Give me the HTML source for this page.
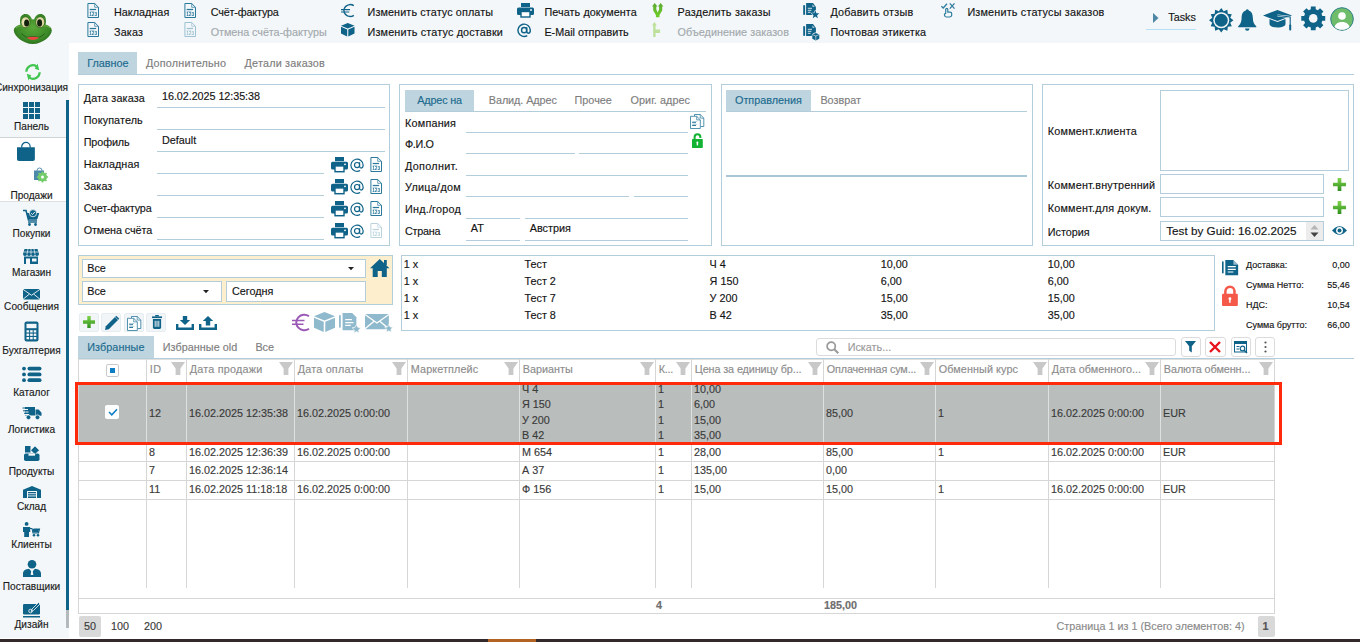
<!DOCTYPE html>
<html lang="ru"><head><meta charset="utf-8"><title>Продажи</title>
<style>
html,body{margin:0;padding:0}
body{width:1360px;height:642px;overflow:hidden;position:relative;background:#fff;
 font-family:"Liberation Sans",sans-serif;font-size:10.8px;color:#141414}
.a{position:absolute}
.t{white-space:nowrap;line-height:16px;height:16px;-webkit-text-stroke:.15px}
.dis{color:#a3a9ad}
.sl{color:#1b1b1b;font-size:10.1px}
#side{position:absolute;left:0;top:0;width:69px;height:642px;overflow:hidden}
svg{overflow:visible}
</style></head>
<body>
<div class="a " style="left:0px;top:0px;width:1360px;height:43px;background:#f3f7f9"></div>
<div class="a " style="left:0px;top:0px;width:69px;height:638px;background:#f3f7f9"></div>
<div class="a " style="left:0px;top:137px;width:66px;height:65px;background:#fff;border-top:1px solid #d0d5d8;border-bottom:1px solid #dde1e3;box-sizing:border-box"></div>
<div class="a " style="left:66px;top:100px;width:3px;height:510px;background:#0f6288"></div>
<div class="a " style="left:66px;top:610px;width:3px;height:18px;background:#b4b9bc"></div>
<div class="a " style="left:0px;top:639px;width:1360px;height:3px;background:#33292a"></div>
<div class="a " style="left:488px;top:639px;width:48px;height:3px;background:#b36422"></div>
<svg class="a" style="left:0px;top:0px;" width="66" height="52" viewBox="0 0 66 52"><defs><radialGradient id="fg" cx="50%" cy="45%" r="60%"><stop offset="0" stop-color="#5aa838"/><stop offset=".7" stop-color="#3c8a28"/><stop offset="1" stop-color="#2a6a1c"/></radialGradient><radialGradient id="fe" cx="45%" cy="45%" r="60%"><stop offset="0" stop-color="#f4f0c8"/><stop offset="1" stop-color="#cfc98a"/></radialGradient></defs><path d="M20 21c0-5 2.500-7 5.500-7s5.500 2 6.500 5.500c.6-.3 1.400-.3 2 0C35 16 37.500 14 40.500 14s5.500 2 5.500 7c0 1.500-.2 2.500-.5 3.500 4 1.200 6.300 3.300 6.300 6 0 5-9 13.500-19 13.500S13.800 35.500 13.800 30.500c0-2.700 2.500-4.800 6.700-6-.3-1-.5-2-.5-3.500z" fill="url(#fg)"/><ellipse cx="25.500" cy="22.300" rx="4.500" ry="5.500" fill="url(#fe)" stroke="#2a5f18" stroke-width=".7"/><ellipse cx="40.200" cy="22.200" rx="4.500" ry="5.500" fill="url(#fe)" stroke="#2a5f18" stroke-width=".7"/><ellipse cx="26.600" cy="23" rx="2.500" ry="3.600" fill="#12200c"/><ellipse cx="39.600" cy="22.900" rx="2.500" ry="3.600" fill="#12200c"/><path d="M21.500 33.800c3 2.600 5 3.400 6 3.600 3.500-1 7.500-1 11 0 1.500-.3 4-1.500 6.200-3.900" fill="none" stroke="#24591a" stroke-width=".9"/><path d="M26.800 37.500c4-1 8.500-1 12.400 0-3 3.300-9.400 3.300-12.400 0z" fill="#e8473f"/><path d="M16 28c2-2 5-2.500 7-2M50 28c-2-2-4.500-2.500-6.500-2" fill="none" stroke="#7cc24c" stroke-width="1" opacity=".7"/></svg>
<svg class="a" style="left:24px;top:63px;" width="18" height="18" viewBox="0 0 18 18"><path d="M2.30 8.77A6.7 6.7 0 0 1 12.55 3.32" fill="none" stroke="#43c552" stroke-width="2.2"/><path d="M10.78 5.64L13.51 0.52L15.25 7.21z" fill="#43c552"/><path d="M15.70 9.23A6.7 6.7 0 0 1 5.45 14.68" fill="none" stroke="#43c552" stroke-width="2.2"/><path d="M7.22 12.36L4.49 17.48L2.75 10.79z" fill="#43c552"/></svg>
<div class="a t sl" style="left:-60px;width:183px;text-align:center;top:80.4px">Синхронизация</div>
<svg class="a" style="left:23px;top:102px;" width="18" height="18" viewBox="0 0 18 18"><rect x="0" y="0" width="5" height="5" fill="#0f6288"/><rect x="6" y="0" width="5" height="5" fill="#0f6288"/><rect x="12" y="0" width="5" height="5" fill="#0f6288"/><rect x="0" y="6" width="5" height="5" fill="#0f6288"/><rect x="6" y="6" width="5" height="5" fill="#0f6288"/><rect x="12" y="6" width="5" height="5" fill="#0f6288"/><rect x="0" y="12" width="5" height="5" fill="#0f6288"/><rect x="6" y="12" width="5" height="5" fill="#0f6288"/><rect x="12" y="12" width="5" height="5" fill="#0f6288"/></svg>
<div class="a t sl" style="left:-60px;width:183px;text-align:center;top:118.7px">Панель</div>
<svg class="a" style="left:17px;top:142px;transform:scale(.94,.97);transform-origin:0 0" width="19" height="19.5" viewBox="0 0 19 19.5"><path d="M5 6V5a4.5 4.5 0 0 1 9 0v1" fill="none" stroke="#0f6288" stroke-width="1.3"/><path d="M0 5.5h19v12a2 2 0 0 1-2 2H2a2 2 0 0 1-2-2z" fill="#0f6288"/></svg>
<svg class="a" style="left:33px;top:167px;" width="15" height="15" viewBox="0 0 15 15"><path d="M4 4V3.5a2.5 2.5 0 0 1 5 0V4" fill="none" stroke="#5b93b0" stroke-width="1"/><path d="M1 3.5h10v9.5H1z" fill="#4d89a8"/><circle cx="9.5" cy="10" r="4.6" fill="#74cb6a"/><circle cx="9.5" cy="10" r="1.6" fill="#fff"/><g stroke="#74cb6a" stroke-width="1.6"><path d="M9.5 4.4v11.2M3.9 10h11.2M5.5 6l8 8M13.5 6l-8 8"/></g><circle cx="9.5" cy="10" r="1.5" fill="#fff"/></svg>
<div class="a t sl" style="left:-60px;width:183px;text-align:center;top:187.9px">Продажи</div>
<svg class="a" style="left:23px;top:209px;" width="17" height="17" viewBox="0 0 17 17"><path d="M0 1.5h3l2.5 9.5h8.5" fill="none" stroke="#0f6288" stroke-width="1.6"/><path d="M3.6 4h12.6l-1.8 6H5.2z" fill="#0f6288"/><circle cx="10" cy="4.2" r="3.6" fill="#0f6288" stroke="#f3f7f9" stroke-width=".8"/><path d="M8.2 4.2l1.3 1.3 2.3-2.5" stroke="#fff" stroke-width=".9" fill="none"/><rect x="5" y="12.3" width="9" height="1.4" fill="#0f6288"/><circle cx="6.5" cy="15.5" r="1.4" fill="#0f6288"/><circle cx="12.5" cy="15.5" r="1.4" fill="#0f6288"/></svg>
<div class="a t sl" style="left:-60px;width:183px;text-align:center;top:226.4px">Покупки</div>
<svg class="a" style="left:23px;top:249px;" width="16" height="15" viewBox="0 0 16 15"><path d="M1.5 0h13l1.5 5a2 2 0 0 1-4 0a2 2 0 0 1-4 0a2 2 0 0 1-4 0a2 2 0 0 1-4 0z" fill="#0f6288"/><g stroke="#f3f7f9" stroke-width=".7"><path d="M5 0L4 5M8 0v5M11 0l1 5M.5 3h15"/></g><path d="M1 7.5h14V15H1z" fill="#0f6288"/><rect x="3" y="9.5" width="4" height="5.5" fill="#f3f7f9"/><rect x="9" y="9.5" width="4.5" height="3" fill="#f3f7f9"/></svg>
<div class="a t sl" style="left:-60px;width:183px;text-align:center;top:265.4px">Магазин</div>
<svg class="a" style="left:23px;top:289px;" width="17" height="10.5" viewBox="0 0 17 10.5"><rect x="0" y="0" width="17" height="10.5" rx="1" fill="#0f6288"/><path d="M0 .3l8.5 6 8.5-6M0 10.3l6.3-5.2M17 10.3l-6.3-5.2" fill="none" stroke="#f3f7f9" stroke-width=".9"/></svg>
<div class="a t sl" style="left:-60px;width:183px;text-align:center;top:298.7px">Сообщения</div>
<svg class="a" style="left:24px;top:321px;" width="15" height="21" viewBox="0 0 15 21"><rect x=".5" y=".5" width="14" height="20" rx="2" fill="#0f6288"/><rect x="2.5" y="2.8" width="10" height="4.4" fill="#f3f7f9"/><rect x="2.5" y="9.2" width="2.6" height="2.3" fill="#f3f7f9"/><rect x="6.1" y="9.2" width="2.6" height="2.3" fill="#f3f7f9"/><rect x="9.7" y="9.2" width="2.6" height="2.3" fill="#f3f7f9"/><rect x="2.5" y="12.6" width="2.6" height="2.3" fill="#f3f7f9"/><rect x="6.1" y="12.6" width="2.6" height="2.3" fill="#f3f7f9"/><rect x="9.7" y="12.6" width="2.6" height="2.3" fill="#f3f7f9"/><rect x="2.5" y="16.0" width="2.6" height="2.3" fill="#f3f7f9"/><rect x="6.1" y="16.0" width="2.6" height="2.3" fill="#f3f7f9"/><rect x="9.7" y="16.0" width="2.6" height="2.3" fill="#f3f7f9"/></svg>
<div class="a t sl" style="left:-60px;width:183px;text-align:center;top:343.29999999999995px">Бухгалтерия</div>
<svg class="a" style="left:21.5px;top:366px;" width="20" height="17" viewBox="0 0 20 17"><circle cx="2" cy="2.6" r="1.9" fill="#0f6288"/><rect x="5.5" y="0.7" width="14" height="3.8" rx="1.9" fill="#0f6288"/><circle cx="2" cy="8.4" r="1.9" fill="#0f6288"/><rect x="5.5" y="6.5" width="14" height="3.8" rx="1.9" fill="#0f6288"/><circle cx="2" cy="14.2" r="1.9" fill="#0f6288"/><rect x="5.5" y="12.299999999999999" width="14" height="3.8" rx="1.9" fill="#0f6288"/></svg>
<div class="a t sl" style="left:-60px;width:183px;text-align:center;top:385.09999999999997px">Каталог</div>
<svg class="a" style="left:21.5px;top:407px;" width="20" height="13" viewBox="0 0 20 13"><path d="M3 0h10v8.5H3z" fill="#0f6288"/><path d="M13.5 2.5h3.2l2.8 3.2v3H13.5z" fill="#0f6288"/><g stroke="#f3f7f9" stroke-width="1"><path d="M0 2.5h6M1.5 5h5M3 7.5h4"/></g><g stroke="#0f6288" stroke-width="1"><path d="M.5 1h4M1 3.8h3M2 6.3h2"/></g><circle cx="6.5" cy="10.3" r="2.4" fill="#0f6288" stroke="#f3f7f9" stroke-width=".8"/><circle cx="15.5" cy="10.3" r="2.4" fill="#0f6288" stroke="#f3f7f9" stroke-width=".8"/></svg>
<div class="a t sl" style="left:-60px;width:183px;text-align:center;top:421.7px">Логистика</div>
<svg class="a" style="left:24px;top:446px;" width="16" height="15" viewBox="0 0 16 15"><rect x="0" y="7.5" width="15.5" height="7.5" rx="1.8" fill="#0f6288"/><rect x="1" y="0" width="5.5" height="6.5" fill="#0f6288"/><path d="M11 0l4.3 4.3-4.3 4.3-4.3-4.3z" fill="#0f6288" stroke="#f3f7f9" stroke-width=".6"/><path d="M4.5 7.5h6.5v2.2H4.5z" fill="#f3f7f9"/></svg>
<div class="a t sl" style="left:-60px;width:183px;text-align:center;top:463.7px">Продукты</div>
<svg class="a" style="left:22.5px;top:486px;" width="18" height="12" viewBox="0 0 18 12"><path d="M9 0l9 3.8V12H0V3.8z" fill="#0f6288"/><rect x="4" y="5" width="10" height="7" fill="#f3f7f9"/><g fill="#0f6288"><rect x="5" y="6" width="8" height="1.3"/><rect x="5" y="8.2" width="8" height="1.3"/><rect x="5" y="10.4" width="8" height="1.6"/></g></svg>
<div class="a t sl" style="left:-60px;width:183px;text-align:center;top:499.4px">Склад</div>
<svg class="a" style="left:23px;top:522px;" width="17" height="15" viewBox="0 0 17 15"><circle cx="3.6" cy="1.9" r="1.9" fill="#0f6288"/><path d="M0 5h7.2v5H6v5H1.2v-5H0z" fill="#0f6288"/><path d="M7 6.5h2l1 4.5h5.5l1-4h-6" fill="none" stroke="#0f6288" stroke-width="1.1"/><path d="M9.6 7h6.6l-.9 3.6h-5z" fill="#0f6288"/><circle cx="11" cy="13.3" r="1.3" fill="#0f6288"/><circle cx="15" cy="13.3" r="1.3" fill="#0f6288"/></svg>
<div class="a t sl" style="left:-60px;width:183px;text-align:center;top:537.4px">Клиенты</div>
<svg class="a" style="left:23px;top:560px;" width="18" height="17" viewBox="0 0 18 17"><circle cx="9" cy="4.3" r="4.3" fill="#0f6288"/><path d="M0 17v-3.5c0-3 3-4.5 6-4.7L9 12l3-3.2c3 .2 6 1.700 6 4.700V17z" fill="#0f6288"/><path d="M8.300 10.500h1.400l.6 4.500H7.700z" fill="#f3f7f9"/></svg>
<div class="a t sl" style="left:-60px;width:183px;text-align:center;top:578.9px">Поставщики</div>
<svg class="a" style="left:23px;top:601px;" width="18" height="17" viewBox="0 0 18 17"><rect x="0" y="3" width="17" height="10.500" rx="1.200" fill="#0f6288"/><rect x="0" y="15" width="17" height="1.500" fill="#0f6288"/><path d="M8 10.500l1-2.500L15.500 1.500l1.500 1.500L10.500 9.500z" fill="#0f6288" stroke="#f3f7f9" stroke-width=".8"/><circle cx="7.500" cy="10" r="1.800" fill="none" stroke="#f3f7f9" stroke-width=".8"/></svg>
<div class="a t sl" style="left:-60px;width:183px;text-align:center;top:617.4px">Дизайн</div>
<svg class="a" style="left:86.5px;top:2.7px;" width="13" height="15" viewBox="0 0 13 15"><g opacity="1" style="will-change:transform"><path d="M.9 .5h6.800l3.800 3.800v10.200H.9z" fill="none" stroke="#2a789b" stroke-width="1"/><path d="M7.700 .5v3.800h3.800" fill="none" stroke="#2a789b" stroke-width=".7"/><rect x="2.700" y="5.900" width="6.400" height="1.200" fill="#2a789b"/><rect x="2.700" y="7.900" width="4.600" height=".7" fill="#2a789b" opacity=".55"/><text x="6.200" y="13.300" font-size="4.800" font-weight="bold" text-anchor="middle" fill="#2a789b" font-family="Liberation Sans, sans-serif" style="-webkit-font-smoothing:antialiased">123</text></g></svg>
<div class="a t " style="left:114px;top:4.199999999999999px;letter-spacing:0.02px;">Накладная</div>
<svg class="a" style="left:86.5px;top:22.2px;" width="13" height="15" viewBox="0 0 13 15"><g opacity="1" style="will-change:transform"><path d="M.9 .5h6.800l3.800 3.800v10.200H.9z" fill="none" stroke="#2a789b" stroke-width="1"/><path d="M7.700 .5v3.800h3.800" fill="none" stroke="#2a789b" stroke-width=".7"/><rect x="2.700" y="5.900" width="6.400" height="1.200" fill="#2a789b"/><rect x="2.700" y="7.900" width="4.600" height=".7" fill="#2a789b" opacity=".55"/><text x="6.200" y="13.300" font-size="4.800" font-weight="bold" text-anchor="middle" fill="#2a789b" font-family="Liberation Sans, sans-serif" style="-webkit-font-smoothing:antialiased">123</text></g></svg>
<div class="a t " style="left:114px;top:24px;letter-spacing:0.17px;">Заказ</div>
<svg class="a" style="left:183.8px;top:2.7px;" width="13" height="15" viewBox="0 0 13 15"><g opacity="1" style="will-change:transform"><path d="M.9 .5h6.800l3.800 3.800v10.200H.9z" fill="none" stroke="#2a789b" stroke-width="1"/><path d="M7.700 .5v3.800h3.800" fill="none" stroke="#2a789b" stroke-width=".7"/><rect x="2.700" y="5.900" width="6.400" height="1.200" fill="#2a789b"/><rect x="2.700" y="7.900" width="4.600" height=".7" fill="#2a789b" opacity=".55"/><text x="6.200" y="13.300" font-size="4.800" font-weight="bold" text-anchor="middle" fill="#2a789b" font-family="Liberation Sans, sans-serif" style="-webkit-font-smoothing:antialiased">123</text></g></svg>
<div class="a t " style="left:210.7px;top:4.199999999999999px;letter-spacing:-0.16px;">Счёт-фактура</div>
<svg class="a" style="left:183.8px;top:22.2px;" width="13" height="15" viewBox="0 0 13 15"><g opacity="0.75" style="will-change:transform"><path d="M.9 .5h6.800l3.800 3.800v10.200H.9z" fill="none" stroke="#7fb0c6" stroke-width="1"/><path d="M7.700 .5v3.800h3.800" fill="none" stroke="#7fb0c6" stroke-width=".7"/><rect x="2.700" y="5.900" width="6.400" height="1.200" fill="#7fb0c6"/><rect x="2.700" y="7.900" width="4.600" height=".7" fill="#7fb0c6" opacity=".55"/><text x="6.200" y="13.300" font-size="4.800" font-weight="bold" text-anchor="middle" fill="#7fb0c6" font-family="Liberation Sans, sans-serif" style="-webkit-font-smoothing:antialiased">123</text></g></svg>
<div class="a t dis" style="left:210.7px;top:24px;letter-spacing:-0.05px;">Отмена счёта-фактуры</div>
<svg class="a" style="left:341px;top:4px;" width="13.5" height="13" viewBox="0 0 13.5 13"><path d="M12.800 1.700A6.200 5.900 0 1 0 12.800 11.300" fill="none" stroke="#0f6288" stroke-width="1.500"/><path d="M0 5.600h9M0 8h8.300" stroke="#0f6288" stroke-width="1.100"/></svg>
<div class="a t " style="left:367.5px;top:4.199999999999999px;letter-spacing:0.12px;">Изменить статус оплаты</div>
<svg class="a" style="left:341px;top:23px;" width="13.5" height="13.5" viewBox="0 0 13.5 13.5"><path d="M6.750 0L13.500 2.800 6.750 5.600 0 2.800z" fill="#0f6288"/><path d="M0 3.800l6.200 2.600v7.100L0 10.600z" fill="#0f6288"/><path d="M13.500 3.800L7.300 6.400v7.100l6.200-2.900z" fill="#0f6288"/></svg>
<div class="a t " style="left:367.5px;top:24px;letter-spacing:0.17px;">Изменить статус доставки</div>
<svg class="a" style="left:517px;top:3.3px;" width="17" height="14.5" viewBox="0 0 17 14.5"><rect x="4" y="0" width="9" height="4" fill="#0f6288"/><rect x="0" y="4.5" width="17" height="7.5" rx="1.5" fill="#0f6288"/><rect x="4" y="8.5" width="9" height="5.5" fill="#fff" stroke="#0f6288" stroke-width="1.4"/><circle cx="14" cy="7" r=".9" fill="#fff"/></svg>
<div class="a t " style="left:544.4px;top:4.199999999999999px;letter-spacing:0.09px;">Печать документа</div>
<svg class="a" style="left:517px;top:22.8px;transform:scale(.95);transform-origin:0 0" width="15" height="15" viewBox="0 0 15 15"><circle cx="7.500" cy="7.500" r="2.700" fill="none" stroke="#0f6288" stroke-width="1.5"/><path d="M10.200 4.600v4.200c0 1.300 .8 1.900 1.700 1.900 1.300 0 2.100-1.300 2.100-3.200A6.500 6.500 0 1 0 10.800 13.300" fill="none" stroke="#0f6288" stroke-width="1.5"/></svg>
<div class="a t " style="left:544.4px;top:24px;letter-spacing:-0.01px;">E-Mail отправить</div>
<svg class="a" style="left:651.8px;top:2.9px;" width="11.4" height="14.3" viewBox="0 0 11.4 14.3"><defs><linearGradient id="sg" x1="0" y1="0" x2="0" y2="1"><stop offset="0" stop-color="#5aa832"/><stop offset="1" stop-color="#6fd024"/></linearGradient></defs><path d="M2.750 0L5.500 3.600H4.300V6.500L5.700 9.600 7.100 6.500V3.600H5.900L8.650 0 11.400 3.600H10.200V7.400L7.500 12V14.300H3.900V12L1.200 7.400V3.600H0z" fill="url(#sg)"/></svg>
<div class="a t " style="left:677.6px;top:4.199999999999999px;letter-spacing:0.20px;">Разделить заказы</div>
<svg class="a" style="left:652.3px;top:22.3px;" width="8.2" height="15" viewBox="0 0 8.2 15"><path d="M2.400 0L4.800 3.500H3.600V7.600H8.100V11H3.600V15H1.200V3.500H0z" fill="#bde19a"/></svg>
<div class="a t dis" style="left:677.6px;top:24px;letter-spacing:0.05px;">Объединение заказов</div>
<svg class="a" style="left:802.7px;top:2.9px;" width="17" height="16.5" viewBox="0 0 17 16.5"><rect x=".2" y="2.200" width="1.900" height="9.600" fill="#0f6288"/><path d="M3.100 0h6.900l2.900 3.900v8.200H3.100z" fill="#0f6288"/><path d="M9.300 1.200l.2 2.600 2.300.2z" fill="#fff" opacity=".75"/><g stroke="#fff" stroke-width=".9" opacity=".9"><path d="M4.800 5.300h4.200M4.800 7.300h3.600M4.800 9.300h2.800"/></g><polygon points="12.30,7.40 13.42,10.16 16.39,10.37 14.11,12.29 14.83,15.18 12.30,13.60 9.77,15.18 10.49,12.29 8.21,10.37 11.18,10.16" fill="#0f6288" stroke="#f3f7f9" stroke-width="1" paint-order="stroke"/></svg>
<div class="a t " style="left:830.4px;top:4.199999999999999px;letter-spacing:0.22px;">Добавить отзыв</div>
<svg class="a" style="left:802.7px;top:23.9px;" width="17" height="16.5" viewBox="0 0 17 16.5"><rect x=".2" y="2.200" width="1.900" height="9.600" fill="#0f6288"/><path d="M3.100 0h6.900l2.900 3.900v8.200H3.100z" fill="#0f6288"/><path d="M9.300 1.200l.2 2.600 2.300.2z" fill="#fff" opacity=".75"/><g stroke="#fff" stroke-width=".9" opacity=".9"><path d="M4.800 5.300h4.200M4.800 7.300h3.600M4.800 9.300h2.800"/></g><circle cx="12.800" cy="12.700" r="4.300" fill="#f3f7f9"/><path d="M12.800 8.900l3.500 1.500v4.400l-3.500 1.600-3.500-1.600v-4.400z" fill="#0f6288"/><path d="M9.500 10.600l3.300 1.400 3.300-1.400M12.800 12v4" fill="none" stroke="#f3f7f9" stroke-width=".6"/></svg>
<div class="a t " style="left:830.4px;top:24px;letter-spacing:0.16px;">Почтовая этикетка</div>
<svg class="a" style="left:940.5px;top:3px;" width="15" height="14.5" viewBox="0 0 15 14.5"><g fill="none" stroke="#2f7d9f" stroke-width="1.300"><path d="M.4 3.300l1.800 1.700L6 .7"/><path d="M8.800 .4l4.700 5.200M13.500 .4L8.800 5.600"/><path d="M4.700 10.300V6.500a1.050 1.050 0 0 1 2.100 0v2.700h2.400a1.500 1.500 0 0 1 1.500 1.500v1.200a2.100 2.100 0 0 1-2.100 2.100H5.600a2.100 2.100 0 0 1-2.100-2.100v-.9z" stroke-width="1.200"/></g></svg>
<div class="a t " style="left:967.4px;top:4.199999999999999px;letter-spacing:0.19px;">Изменить статусы заказов</div>
<svg class="a" style="left:1153px;top:13px;" width="6" height="10" viewBox="0 0 6 10"><path d="M0 0l5.500 5L0 10z" fill="#4e86a5"/></svg>
<div class="a t " style="left:1168.3px;top:9px;">Tasks</div>
<div class="a " style="left:1146px;top:29px;width:50px;height:1px;background:#b5e1f7"></div>
<svg class="a" style="left:1208.8px;top:7.5px;" width="24.5" height="24.5" viewBox="0 0 24.5 24.5"><polygon points="12.25,0.05 14.66,3.27 18.35,1.68 18.83,5.67 22.82,6.15 21.23,9.84 24.45,12.25 21.23,14.66 22.82,18.35 18.83,18.83 18.35,22.82 14.66,21.23 12.25,24.45 9.84,21.23 6.15,22.82 5.67,18.83 1.68,18.35 3.27,14.66 0.05,12.25 3.27,9.84 1.68,6.15 5.67,5.67 6.15,1.68 9.84,3.27" fill="#0f6288"/><circle cx="12.250" cy="12.250" r="8" fill="#f3f7f9"/><circle cx="12.250" cy="12.250" r="6.500" fill="#0f6288"/></svg>
<svg class="a" style="left:1238px;top:9px;" width="18.5" height="22" viewBox="0 0 18.5 22"><circle cx="9.250" cy="1.800" r="1.600" fill="#0f6288"/><path d="M9.250 1.500c4.200 0 5.600 3.500 5.600 7.500 0 4 1.400 6.300 3.400 8.200v1H.2v-1c2-1.900 3.400-4.200 3.400-8.200 0-4 1.400-7.500 5.650-7.500z" fill="#0f6288"/><path d="M7 19.500h4.500a2.250 2.250 0 0 1-4.500 0z" fill="#0f6288"/></svg>
<svg class="a" style="left:1263px;top:9.5px;" width="30.5" height="21" viewBox="0 0 30.5 21"><path d="M14.500 0L29 5.500 14.500 11 0 5.500z" fill="#0f6288"/><path d="M6.500 9v5c0 2 3.600 3.500 8 3.500s8-1.500 8-3.500V9l-8 3z" fill="#0f6288"/><path d="M14.500 5.500l12.700 1.500v8" fill="none" stroke="#f3f7f9" stroke-width="2.200"/><path d="M14.500 5.500l12.700 1.500v8" fill="none" stroke="#0f6288" stroke-width="1.100"/><rect x="26.200" y="14.500" width="2" height="6" rx=".8" fill="#0f6288"/></svg>
<svg class="a" style="left:1300.5px;top:6px;" width="24.5" height="25" viewBox="0 0 24.5 25"><polygon points="8.65,3.72 9.79,3.33 9.87,0.43 14.63,0.43 14.71,3.33 15.85,3.72 16.92,4.24 19.03,2.26 22.39,5.62 20.41,7.73 20.93,8.80 21.32,9.94 24.22,10.02 24.22,14.78 21.32,14.86 20.93,16.00 20.41,17.07 22.39,19.18 19.03,22.54 16.92,20.56 15.85,21.08 14.71,21.47 14.63,24.37 9.87,24.37 9.79,21.47 8.65,21.08 7.58,20.56 5.47,22.54 2.11,19.18 4.09,17.07 3.57,16.00 3.18,14.86 0.28,14.78 0.28,10.02 3.18,9.94 3.57,8.80 4.09,7.73 2.11,5.62 5.47,2.26 7.58,4.24" fill="#0f6288"/><circle cx="12.250" cy="12.400" r="4.300" fill="#f3f7f9"/></svg>
<svg class="a" style="left:1330px;top:7px;" width="24" height="24" viewBox="0 0 24 24"><circle cx="12" cy="12" r="11.300" fill="#6fbd6b" stroke="#2f7e8c" stroke-width="1"/><clipPath id="uc"><circle cx="12" cy="12" r="10.800"/></clipPath><g clip-path="url(#uc)" fill="#fff"><circle cx="12" cy="9" r="3.800"/><path d="M4 23c0-5.500 3.500-8 8-8s8 2.500 8 8z"/></g></svg>
<div class="a " style="left:78px;top:52px;width:59px;height:23px;background:#bed5df"></div>
<div class="a " style="left:78px;top:74px;width:1276px;height:1px;background:#b3cddb"></div>
<div class="a t " style="left:87.2px;top:55.2px;color:#1b6a8e">Главное</div>
<div class="a t " style="left:146px;top:55.2px;letter-spacing:0.19px;color:#7d7d7d">Дополнительно</div>
<div class="a t " style="left:244.5px;top:55.2px;letter-spacing:0.21px;color:#7d7d7d">Детали заказов</div>
<div class="a " style="left:78px;top:84px;width:312px;height:162px;border:1px solid #b3cddb;box-sizing:border-box;background:#fff;"></div>
<div class="a t " style="left:83.7px;top:90px;letter-spacing:0.15px;">Дата заказа</div>
<div class="a " style="left:157px;top:107px;width:228px;height:1px;background:#b3cddb"></div>
<div class="a t " style="left:83.7px;top:112px;letter-spacing:0.11px;">Покупатель</div>
<div class="a " style="left:157px;top:129px;width:228px;height:1px;background:#b3cddb"></div>
<div class="a t " style="left:83.7px;top:134px;letter-spacing:-0.10px;">Профиль</div>
<div class="a " style="left:157px;top:151px;width:228px;height:1px;background:#b3cddb"></div>
<div class="a t " style="left:83.7px;top:156px;letter-spacing:0.07px;">Накладная</div>
<div class="a " style="left:157px;top:173px;width:167px;height:1px;background:#b3cddb"></div>
<svg class="a" style="left:331px;top:156.7px;transform:scale(1,1.05);transform-origin:0 0" width="17" height="14.5" viewBox="0 0 17 14.5"><rect x="4" y="0" width="9" height="4" fill="#0f6288"/><rect x="0" y="4.5" width="17" height="7.5" rx="1.5" fill="#0f6288"/><rect x="4" y="8.5" width="9" height="5.5" fill="#fff" stroke="#0f6288" stroke-width="1.4"/><circle cx="14" cy="7" r=".9" fill="#fff"/></svg>
<svg class="a" style="left:350.3px;top:158.1px;transform:scale(.94);transform-origin:0 0" width="15" height="15" viewBox="0 0 15 15"><circle cx="7.500" cy="7.500" r="2.700" fill="none" stroke="#0f6288" stroke-width="1.25"/><path d="M10.200 4.600v4.200c0 1.300 .8 1.900 1.700 1.900 1.300 0 2.100-1.300 2.100-3.200A6.500 6.500 0 1 0 10.800 13.300" fill="none" stroke="#0f6288" stroke-width="1.25"/></svg>
<svg class="a" style="left:370px;top:157px;" width="13" height="15" viewBox="0 0 13 15"><g opacity="1" style="will-change:transform"><path d="M.9 .5h6.800l3.800 3.800v10.200H.9z" fill="none" stroke="#2a789b" stroke-width="1"/><path d="M7.700 .5v3.800h3.800" fill="none" stroke="#2a789b" stroke-width=".7"/><rect x="2.700" y="5.900" width="6.400" height="1.200" fill="#2a789b"/><rect x="2.700" y="7.900" width="4.600" height=".7" fill="#2a789b" opacity=".55"/><text x="6.200" y="13.300" font-size="4.800" font-weight="bold" text-anchor="middle" fill="#2a789b" font-family="Liberation Sans, sans-serif" style="-webkit-font-smoothing:antialiased">123</text></g></svg>
<div class="a t " style="left:83.7px;top:178px;letter-spacing:0.07px;">Заказ</div>
<div class="a " style="left:157px;top:195px;width:167px;height:1px;background:#b3cddb"></div>
<svg class="a" style="left:331px;top:178.7px;transform:scale(1,1.05);transform-origin:0 0" width="17" height="14.5" viewBox="0 0 17 14.5"><rect x="4" y="0" width="9" height="4" fill="#0f6288"/><rect x="0" y="4.5" width="17" height="7.5" rx="1.5" fill="#0f6288"/><rect x="4" y="8.5" width="9" height="5.5" fill="#fff" stroke="#0f6288" stroke-width="1.4"/><circle cx="14" cy="7" r=".9" fill="#fff"/></svg>
<svg class="a" style="left:350.3px;top:180.1px;transform:scale(.94);transform-origin:0 0" width="15" height="15" viewBox="0 0 15 15"><circle cx="7.500" cy="7.500" r="2.700" fill="none" stroke="#0f6288" stroke-width="1.25"/><path d="M10.200 4.600v4.200c0 1.300 .8 1.900 1.700 1.900 1.300 0 2.100-1.300 2.100-3.200A6.500 6.500 0 1 0 10.800 13.300" fill="none" stroke="#0f6288" stroke-width="1.25"/></svg>
<svg class="a" style="left:370px;top:179px;" width="13" height="15" viewBox="0 0 13 15"><g opacity="1" style="will-change:transform"><path d="M.9 .5h6.800l3.800 3.800v10.200H.9z" fill="none" stroke="#2a789b" stroke-width="1"/><path d="M7.700 .5v3.800h3.800" fill="none" stroke="#2a789b" stroke-width=".7"/><rect x="2.700" y="5.900" width="6.400" height="1.200" fill="#2a789b"/><rect x="2.700" y="7.900" width="4.600" height=".7" fill="#2a789b" opacity=".55"/><text x="6.200" y="13.300" font-size="4.800" font-weight="bold" text-anchor="middle" fill="#2a789b" font-family="Liberation Sans, sans-serif" style="-webkit-font-smoothing:antialiased">123</text></g></svg>
<div class="a t " style="left:83.7px;top:200px;letter-spacing:-0.14px;">Счет-фактура</div>
<div class="a " style="left:157px;top:217px;width:167px;height:1px;background:#b3cddb"></div>
<svg class="a" style="left:331px;top:200.7px;transform:scale(1,1.05);transform-origin:0 0" width="17" height="14.5" viewBox="0 0 17 14.5"><rect x="4" y="0" width="9" height="4" fill="#0f6288"/><rect x="0" y="4.5" width="17" height="7.5" rx="1.5" fill="#0f6288"/><rect x="4" y="8.5" width="9" height="5.5" fill="#fff" stroke="#0f6288" stroke-width="1.4"/><circle cx="14" cy="7" r=".9" fill="#fff"/></svg>
<svg class="a" style="left:350.3px;top:202.1px;transform:scale(.94);transform-origin:0 0" width="15" height="15" viewBox="0 0 15 15"><circle cx="7.500" cy="7.500" r="2.700" fill="none" stroke="#0f6288" stroke-width="1.25"/><path d="M10.200 4.600v4.200c0 1.300 .8 1.900 1.700 1.900 1.300 0 2.100-1.300 2.100-3.200A6.500 6.500 0 1 0 10.800 13.300" fill="none" stroke="#0f6288" stroke-width="1.25"/></svg>
<svg class="a" style="left:370px;top:201px;" width="13" height="15" viewBox="0 0 13 15"><g opacity="1" style="will-change:transform"><path d="M.9 .5h6.800l3.800 3.800v10.200H.9z" fill="none" stroke="#2a789b" stroke-width="1"/><path d="M7.700 .5v3.800h3.800" fill="none" stroke="#2a789b" stroke-width=".7"/><rect x="2.700" y="5.900" width="6.400" height="1.200" fill="#2a789b"/><rect x="2.700" y="7.900" width="4.600" height=".7" fill="#2a789b" opacity=".55"/><text x="6.200" y="13.300" font-size="4.800" font-weight="bold" text-anchor="middle" fill="#2a789b" font-family="Liberation Sans, sans-serif" style="-webkit-font-smoothing:antialiased">123</text></g></svg>
<div class="a t " style="left:83.7px;top:222px;letter-spacing:-0.09px;">Отмена счёта</div>
<div class="a " style="left:157px;top:239px;width:167px;height:1px;background:#b3cddb"></div>
<svg class="a" style="left:331px;top:222.7px;transform:scale(1,1.05);transform-origin:0 0" width="17" height="14.5" viewBox="0 0 17 14.5"><rect x="4" y="0" width="9" height="4" fill="#0f6288"/><rect x="0" y="4.5" width="17" height="7.5" rx="1.5" fill="#0f6288"/><rect x="4" y="8.5" width="9" height="5.5" fill="#fff" stroke="#0f6288" stroke-width="1.4"/><circle cx="14" cy="7" r=".9" fill="#fff"/></svg>
<svg class="a" style="left:350.3px;top:224.1px;transform:scale(.94);transform-origin:0 0" width="15" height="15" viewBox="0 0 15 15"><circle cx="7.500" cy="7.500" r="2.700" fill="none" stroke="#0f6288" stroke-width="1.25"/><path d="M10.200 4.600v4.200c0 1.300 .8 1.900 1.700 1.900 1.300 0 2.100-1.300 2.100-3.200A6.500 6.500 0 1 0 10.800 13.300" fill="none" stroke="#0f6288" stroke-width="1.25"/></svg>
<svg class="a" style="left:370px;top:223px;" width="13" height="15" viewBox="0 0 13 15"><g opacity="0.7" style="will-change:transform"><path d="M.9 .5h6.800l3.800 3.800v10.200H.9z" fill="none" stroke="#9cc0d1" stroke-width="1"/><path d="M7.700 .5v3.800h3.800" fill="none" stroke="#9cc0d1" stroke-width=".7"/><rect x="2.700" y="5.900" width="6.400" height="1.200" fill="#9cc0d1"/><rect x="2.700" y="7.900" width="4.600" height=".7" fill="#9cc0d1" opacity=".55"/><text x="6.200" y="13.300" font-size="4.800" font-weight="bold" text-anchor="middle" fill="#9cc0d1" font-family="Liberation Sans, sans-serif" style="-webkit-font-smoothing:antialiased">123</text></g></svg>
<div class="a t " style="left:162px;top:88px;letter-spacing:-0.06px;">16.02.2025 12:35:38</div>
<div class="a t " style="left:162px;top:132px;">Default</div>
<div class="a " style="left:399px;top:84px;width:313px;height:162px;border:1px solid #b3cddb;box-sizing:border-box;background:#fff;"></div>
<div class="a " style="left:405px;top:90px;width:69px;height:22px;background:#bed5df"></div>
<div class="a " style="left:405px;top:111px;width:301px;height:1px;background:#b3cddb"></div>
<div class="a t " style="left:417.3px;top:92.3px;letter-spacing:-0.15px;color:#1b6a8e">Адрес на</div>
<div class="a t " style="left:488.8px;top:92.3px;letter-spacing:-0.06px;color:#7d7d7d">Валид. Адрес</div>
<div class="a t " style="left:574.6px;top:92.3px;color:#7d7d7d">Прочее</div>
<div class="a t " style="left:630.5px;top:92.3px;letter-spacing:0.07px;color:#7d7d7d">Ориг. адрес</div>
<div class="a t " style="left:405px;top:115px;letter-spacing:0.22px;">Компания</div>
<div class="a t " style="left:405px;top:135.8px;letter-spacing:-0.34px;">Ф.И.О</div>
<div class="a t " style="left:405px;top:158px;letter-spacing:0.32px;">Дополнит.</div>
<div class="a t " style="left:405px;top:178.8px;letter-spacing:0.29px;">Улица/дом</div>
<div class="a t " style="left:405px;top:201px;letter-spacing:0.22px;">Инд./город</div>
<div class="a t " style="left:405px;top:223px;letter-spacing:-0.24px;">Страна</div>
<div class="a " style="left:466px;top:132px;width:222px;height:1px;background:#b3cddb"></div>
<div class="a " style="left:466px;top:153px;width:109px;height:1px;background:#b3cddb"></div>
<div class="a " style="left:579px;top:153px;width:109px;height:1px;background:#b3cddb"></div>
<div class="a " style="left:466px;top:175px;width:222px;height:1px;background:#b3cddb"></div>
<div class="a " style="left:466px;top:196px;width:163px;height:1px;background:#b3cddb"></div>
<div class="a " style="left:634px;top:196px;width:54px;height:1px;background:#b3cddb"></div>
<div class="a " style="left:466px;top:218px;width:54px;height:1px;background:#b3cddb"></div>
<div class="a " style="left:525px;top:218px;width:163px;height:1px;background:#b3cddb"></div>
<div class="a " style="left:466px;top:240px;width:54px;height:1px;background:#b3cddb"></div>
<div class="a " style="left:525px;top:240px;width:163px;height:1px;background:#b3cddb"></div>
<div class="a t " style="left:470.8px;top:220.3px;">AT</div>
<div class="a t " style="left:529.8px;top:220.3px;">Австрия</div>
<svg class="a" style="left:689.6px;top:113.8px;" width="15" height="15" viewBox="0 0 15 15"><path d="M4.500 2V.5h5.700l3.600 3.600v8.400h-3" fill="#fff" stroke="#2a789b" stroke-width=".8"/><path d="M10.200 .5v3.600h3.600" fill="none" stroke="#2a789b" stroke-width=".7"/><path d="M.5 2.300h6.200l3.600 3.600v8.600H.5z" fill="#fff" stroke="#2a789b" stroke-width=".8"/><path d="M6.700 2.300v3.600h3.600" fill="none" stroke="#2a789b" stroke-width=".7"/><g stroke="#2a789b"><path d="M2.200 7.600h5" stroke-width=".6" opacity=".7"/><path d="M2.200 8.700h3.800" stroke-width="1"/><path d="M2.200 10.300h5" stroke-width=".6" opacity=".7"/><path d="M2.200 11.500h3.800" stroke-width="1"/></g></svg>
<svg class="a" style="left:691.7px;top:133px;" width="11" height="15" viewBox="0 0 11 15"><path d="M2.600 7V4.200a2.900 2.900 0 0 1 5.800 0V5" fill="none" stroke="#12b332" stroke-width="2"/><rect x="0" y="6.100" width="10.800" height="8.800" rx=".6" fill="#12b332"/><circle cx="5.400" cy="9.600" r="1" fill="#fff"/><rect x="4.700" y="9.800" width="1.400" height="2.600" fill="#fff"/></svg>
<div class="a " style="left:721px;top:84px;width:312px;height:162px;border:1px solid #b3cddb;box-sizing:border-box;background:#fff;"></div>
<div class="a " style="left:726px;top:90px;width:85px;height:22px;background:#bed5df"></div>
<div class="a " style="left:726px;top:111px;width:301px;height:1px;background:#b3cddb"></div>
<div class="a t " style="left:735px;top:92.3px;color:#1b6a8e">Отправления</div>
<div class="a t " style="left:820.4px;top:92.3px;color:#7d7d7d">Возврат</div>
<div class="a " style="left:726px;top:174.5px;width:301px;height:2px;background:#a9c6d6"></div>
<div class="a " style="left:1042px;top:84px;width:312px;height:162px;border:1px solid #b3cddb;box-sizing:border-box;background:#fff;"></div>
<div class="a " style="left:1160px;top:90px;width:189px;height:81px;border:1px solid #b3cddb;box-sizing:border-box"></div>
<div class="a " style="left:1160px;top:174px;width:164px;height:20px;border:1px solid #b3cddb;box-sizing:border-box"></div>
<div class="a " style="left:1160px;top:197px;width:164px;height:20px;border:1px solid #b3cddb;box-sizing:border-box"></div>
<div class="a " style="left:1160px;top:221px;width:164px;height:20px;border:1px solid #b3cddb;box-sizing:border-box"></div>
<div class="a " style="left:1306px;top:222px;width:17px;height:18px;background:#ececec"></div>
<svg class="a" style="left:1310px;top:225px;" width="9" height="12" viewBox="0 0 9 12"><path d="M4.500 0L8.500 4.500h-8z" fill="#b5b5b5"/><path d="M4.500 12L8.500 7.500h-8z" fill="#444"/></svg>
<div class="a t " style="left:1047.8px;top:122.9px;letter-spacing:0.22px;">Коммент.клиента</div>
<div class="a t " style="left:1047.8px;top:177px;letter-spacing:0.20px;">Коммент.внутренний</div>
<div class="a t " style="left:1047.8px;top:200px;letter-spacing:0.20px;">Коммент.для докум.</div>
<div class="a t " style="left:1047.8px;top:224.3px;">История</div>
<div class="a t " style="left:1166.2px;top:222.6px;letter-spacing:0.02px;font-size:11.7px">Test by Guid: 16.02.2025</div>
<svg class="a" style="left:1333.2px;top:177.6px;" width="13" height="13" viewBox="0 0 12 12"><defs><linearGradient id="pg" x1="0" y1="0" x2="0" y2="1"><stop offset="0" stop-color="#7fd44a"/><stop offset="1" stop-color="#2f8f1f"/></linearGradient></defs><path d="M4.300 0h3.400v4.300H12v3.400H7.700V12H4.300V7.700H0V4.300h4.300z" fill="url(#pg)"/></svg>
<svg class="a" style="left:1333.2px;top:200.9px;" width="13" height="13" viewBox="0 0 12 12"><defs><linearGradient id="pg" x1="0" y1="0" x2="0" y2="1"><stop offset="0" stop-color="#7fd44a"/><stop offset="1" stop-color="#2f8f1f"/></linearGradient></defs><path d="M4.300 0h3.400v4.300H12v3.400H7.700V12H4.300V7.700H0V4.300h4.300z" fill="url(#pg)"/></svg>
<svg class="a" style="left:1332px;top:225px;" width="15" height="11" viewBox="0 0 15 11"><path d="M0 5.500Q7.500-3 15 5.500Q7.500 14 0 5.500z" fill="#0f6288"/><circle cx="7.500" cy="5.500" r="3.400" fill="#fff"/><circle cx="7.500" cy="5.500" r="2" fill="#0f6288"/></svg>
<div class="a " style="left:78px;top:255px;width:315px;height:50px;background:#fdeecd;border:1px solid #b3cddb;box-sizing:border-box"></div>
<div class="a " style="left:82px;top:259px;width:284px;height:19px;background:#fff;border:1px solid #b3cddb;box-sizing:border-box"></div>
<div class="a " style="left:82px;top:281px;width:140px;height:21px;background:#fff;border:1px solid #b3cddb;box-sizing:border-box"></div>
<div class="a " style="left:226px;top:281px;width:140px;height:21px;background:#fff;border:1px solid #b3cddb;box-sizing:border-box"></div>
<div class="a t " style="left:87.2px;top:259.7px;">Все</div>
<div class="a t " style="left:87.2px;top:282.8px;">Все</div>
<div class="a t " style="left:232px;top:282.8px;">Сегодня</div>
<svg class="a" style="left:348px;top:266.7px;" width="6" height="3.3" viewBox="0 0 6 3.3"><path d="M0 0h6L3 3.300z" fill="#222"/></svg>
<svg class="a" style="left:202.6px;top:289.7px;" width="6" height="3.3" viewBox="0 0 6 3.3"><path d="M0 0h6L3 3.300z" fill="#222"/></svg>
<svg class="a" style="left:369.7px;top:259px;" width="19.5" height="17.6" viewBox="0 0 19.5 17.6"><path d="M9.750 0L19.500 9.200H16.800V18H11.800V12H7.700V18H2.700V9.200H0z" fill="#0f6288"/><rect x="14" y="1" width="2.800" height="5" fill="#0f6288"/></svg>
<div class="a " style="left:79.2px;top:313.3px;width:19.6px;height:19px;background:#f1f5f8;border:1px solid #e6edf1;box-sizing:border-box;border-radius:2px"></div>
<div class="a " style="left:101.3px;top:313.3px;width:19.6px;height:19px;background:#f1f5f8;border:1px solid #e6edf1;box-sizing:border-box;border-radius:2px"></div>
<div class="a " style="left:124px;top:313.3px;width:19.6px;height:19px;background:#f1f5f8;border:1px solid #e6edf1;box-sizing:border-box;border-radius:2px"></div>
<div class="a " style="left:146.2px;top:313.3px;width:19.6px;height:19px;background:#f1f5f8;border:1px solid #e6edf1;box-sizing:border-box;border-radius:2px"></div>
<svg class="a" style="left:82.9px;top:316.4px;" width="12" height="12" viewBox="0 0 12 12"><defs><linearGradient id="pg" x1="0" y1="0" x2="0" y2="1"><stop offset="0" stop-color="#7fd44a"/><stop offset="1" stop-color="#2f8f1f"/></linearGradient></defs><path d="M4.300 0h3.400v4.300H12v3.400H7.700V12H4.300V7.700H0V4.300h4.300z" fill="url(#pg)"/></svg>
<svg class="a" style="left:104.8px;top:315.6px;" width="14" height="14" viewBox="0 0 14 14"><path d="M0 14l.8-3.800L10 1l3 3-9.200 9.200z" fill="#0f6288"/><path d="M10.800 .2l3 3" stroke="#0f6288" stroke-width="1.500"/></svg>
<svg class="a" style="left:126.8px;top:315.8px;" width="15" height="15" viewBox="0 0 15 15"><path d="M4.500 2V.5h5.700l3.600 3.600v8.400h-3" fill="#fff" stroke="#2a789b" stroke-width=".8"/><path d="M10.200 .5v3.600h3.600" fill="none" stroke="#2a789b" stroke-width=".7"/><path d="M.5 2.300h6.200l3.600 3.600v8.600H.5z" fill="#fff" stroke="#2a789b" stroke-width=".8"/><path d="M6.700 2.300v3.600h3.600" fill="none" stroke="#2a789b" stroke-width=".7"/><g stroke="#2a789b"><path d="M2.200 7.600h5" stroke-width=".6" opacity=".7"/><path d="M2.200 8.700h3.800" stroke-width="1"/><path d="M2.200 10.300h5" stroke-width=".6" opacity=".7"/><path d="M2.200 11.500h3.800" stroke-width="1"/></g></svg>
<svg class="a" style="left:151.7px;top:315.2px;" width="10" height="14" viewBox="0 0 10 14"><rect x="3.200" y="0" width="3.600" height="1.500" fill="#0f6288"/><rect x="0" y="1.400" width="10" height="1.700" fill="#0f6288"/><path d="M.9 4h8.200v8.600a1.400 1.400 0 0 1-1.400 1.400H2.300A1.400 1.400 0 0 1 .9 12.600z" fill="#0f6288"/><g stroke="#fff" stroke-width=".9"><path d="M3.200 5.800v6M5 5.800v6M6.800 5.800v6"/></g></svg>
<svg class="a" style="left:176px;top:316px;" width="18" height="14" viewBox="0 0 18 14"><path d="M1.200 8v4.700h15.600V8" fill="none" stroke="#0f6288" stroke-width="2.400"/><path d="M6.800 0h4.400v4h3L9 9 3.800 4h3z" fill="#0f6288"/></svg>
<svg class="a" style="left:199px;top:316px;" width="18" height="14" viewBox="0 0 18 14"><path d="M1.200 8v4.700h15.600V8" fill="none" stroke="#0f6288" stroke-width="2.400"/><path d="M6.800 9.500h4.400V5h3L9 0 3.800 5h3z" fill="#0f6288"/></svg>
<svg class="a" style="left:292px;top:314px;" width="18" height="17" viewBox="0 0 18 17"><path d="M17 2.300A8 7.700 0 1 0 17 14.700" fill="none" stroke="#9b59b6" stroke-width="2"/><path d="M0 6.500h12.500M0 10.300h11.500" stroke="#9b59b6" stroke-width="1.500"/></svg>
<svg class="a" style="left:314px;top:312.4px;" width="21" height="20" viewBox="0 0 21 20"><path d="M10.500 0L21 4.300 10.500 8.600 0 4.300z" fill="#8fb9cd"/><path d="M0 5.800l9.700 4v10.200L0 15.800z" fill="#8fb9cd"/><path d="M21 5.800l-9.700 4v10.200l9.700-4.200z" fill="#8fb9cd"/></svg>
<svg class="a" style="left:339.2px;top:312.7px;transform:scale(1.12);transform-origin:0 0" width="22" height="20" viewBox="0 0 22 20"><rect x="0" y="2" width="1.600" height="11" fill="#8fb9cd"/><path d="M3.200 0h8.500l3.800 3.800v11.700H3.200z" fill="#8fb9cd"/><g stroke="#fff" stroke-width="1.100"><path d="M5.500 6h6M5.500 8.500h7.500M5.500 11h5"/></g><path d="M15.600 10.300l1.200 2.500 2.700.4-2 1.900.5 2.700-2.400-1.300-2.400 1.300.5-2.700-2-1.900 2.700-.4z" fill="#8fb9cd" stroke="#fff" stroke-width=".6"/></svg>
<svg class="a" style="left:364.8px;top:314.2px;transform:scale(1.06);transform-origin:0 0" width="28" height="18" viewBox="0 0 28 18"><rect x="0" y="0" width="22.500" height="14.500" rx="1" fill="#8fb9cd"/><path d="M0 .5l11.250 8 11.250-8M0 14l8.300-7M22.500 14l-8.300-7" fill="none" stroke="#fff" stroke-width="1.300"/><path d="M22.500 9.700l1.200 2.500 2.700.4-2 1.900.5 2.700-2.400-1.300-2.400 1.300.5-2.700-2-1.900 2.700-.4z" fill="#8fb9cd" stroke="#fff" stroke-width=".6"/></svg>
<div class="a " style="left:401px;top:255px;width:814px;height:75.5px;border:1px solid #b3cddb;box-sizing:border-box;background:#fff;"></div>
<div class="a t " style="left:403.8px;top:255.8px;">1 x</div>
<div class="a t " style="left:524.5px;top:255.8px;">Тест</div>
<div class="a t " style="left:709.6px;top:255.8px;">Ч 4</div>
<div class="a t " style="left:880.8px;top:255.8px;">10,00</div>
<div class="a t " style="left:1047.8px;top:255.8px;">10,00</div>
<div class="a t " style="left:403.8px;top:272.85px;">1 x</div>
<div class="a t " style="left:524.5px;top:272.85px;">Тест 2</div>
<div class="a t " style="left:709.6px;top:272.85px;">Я 150</div>
<div class="a t " style="left:880.8px;top:272.85px;">6,00</div>
<div class="a t " style="left:1047.8px;top:272.85px;">6,00</div>
<div class="a t " style="left:403.8px;top:289.90000000000003px;">1 x</div>
<div class="a t " style="left:524.5px;top:289.90000000000003px;">Тест 7</div>
<div class="a t " style="left:709.6px;top:289.90000000000003px;">У 200</div>
<div class="a t " style="left:880.8px;top:289.90000000000003px;">15,00</div>
<div class="a t " style="left:1047.8px;top:289.90000000000003px;">15,00</div>
<div class="a t " style="left:403.8px;top:306.95000000000005px;">1 x</div>
<div class="a t " style="left:524.5px;top:306.95000000000005px;">Тест 8</div>
<div class="a t " style="left:709.6px;top:306.95000000000005px;">В 42</div>
<div class="a t " style="left:880.8px;top:306.95000000000005px;">35,00</div>
<div class="a t " style="left:1047.8px;top:306.95000000000005px;">35,00</div>
<svg class="a" style="left:1221.5px;top:260px;transform:scale(.95);transform-origin:0 0" width="17.5" height="16" viewBox="0 0 17.5 16"><rect x="0" y="1.500" width="1.700" height="12.500" fill="#0f6288"/><path d="M3.500 0h8.500l5 5v11H3.500z" fill="#0f6288"/><path d="M12 0v5h5z" fill="#fff" opacity=".55"/><g stroke="#fff" stroke-width="1.200"><path d="M6 7h8.500M6 9.800h8.500M6 12.600h6"/></g></svg>
<svg class="a" style="left:1222px;top:285.3px;transform:scale(.96);transform-origin:0 0" width="16.5" height="22" viewBox="0 0 16.5 22"><path d="M3.500 10V6.500a4.750 4.750 0 0 1 9.500 0V10" fill="none" stroke="#f4594a" stroke-width="2.600"/><rect x="0" y="9" width="16.500" height="13" rx="1.200" fill="#f4594a"/><circle cx="8.250" cy="14.300" r="1.500" fill="#fff"/><rect x="7.500" y="14.500" width="1.500" height="4" fill="#fff"/></svg>
<div class="a t " style="left:1246px;top:257px;font-size:9px">Доставка:</div>
<div class="a t " style="right:10.200000000000045px;top:257px;font-size:9px">0,00</div>
<div class="a t " style="left:1246px;top:277px;font-size:9px">Сумма Нетто:</div>
<div class="a t " style="right:10.200000000000045px;top:277px;font-size:9px">55,46</div>
<div class="a t " style="left:1246px;top:297px;font-size:9px">НДС:</div>
<div class="a t " style="right:10.200000000000045px;top:297px;font-size:9px">10,54</div>
<div class="a t " style="left:1246px;top:317.2px;font-size:9px">Сумма брутто:</div>
<div class="a t " style="right:10.200000000000045px;top:317.2px;font-size:9px">66,00</div>
<div class="a " style="left:78px;top:336px;width:76px;height:23px;background:#bed5df"></div>
<div class="a " style="left:78px;top:358px;width:1276px;height:1px;background:#b3cddb"></div>
<div class="a t " style="left:87.2px;top:339.3px;letter-spacing:0.09px;color:#1b6a8e">Избранные</div>
<div class="a t " style="left:162.7px;top:339.3px;letter-spacing:0.06px;color:#7d7d7d">Избранные old</div>
<div class="a t " style="left:255.4px;top:339.3px;color:#7d7d7d">Все</div>
<div class="a " style="left:816px;top:338px;width:360px;height:18px;border:1px solid #dcdcdc;border-radius:3px;box-sizing:border-box;background:#fff"></div>
<svg class="a" style="left:825.5px;top:340.5px;" width="13" height="13" viewBox="0 0 13 13"><circle cx="5.200" cy="5.200" r="4.100" fill="none" stroke="#999" stroke-width="1.700"/><path d="M8.300 8.300l4 4" stroke="#999" stroke-width="2"/></svg>
<div class="a t " style="left:847.7px;top:338.7px;color:#9a9a9a">Искать...</div>
<div class="a " style="left:1181px;top:337px;width:19.5px;height:19.5px;border:1px solid #dcdcdc;border-radius:3px;box-sizing:border-box;background:#fff"></div>
<div class="a " style="left:1205px;top:337px;width:20.5px;height:19.5px;border:1px solid #dcdcdc;border-radius:3px;box-sizing:border-box;background:#fff"></div>
<div class="a " style="left:1231.3px;top:337px;width:19.5px;height:19.5px;border:1px solid #dcdcdc;border-radius:3px;box-sizing:border-box;background:#fff"></div>
<div class="a " style="left:1255px;top:337px;width:20px;height:19.5px;border:1px solid #dcdcdc;border-radius:3px;box-sizing:border-box;background:#fff"></div>
<svg class="a" style="left:1185.3px;top:341px;" width="11" height="12" viewBox="0 0 11 12"><path d="M0 0h11L6.800 5.200V11.500L4.200 9.800V5.200z" fill="#0f6288"/></svg>
<svg class="a" style="left:1209.3px;top:341px;" width="12" height="12" viewBox="0 0 12 12"><path d="M1 1l10 10M11 1L1 11" stroke="#e8141c" stroke-width="2.400"/></svg>
<svg class="a" style="left:1233.8px;top:341px;" width="14" height="13" viewBox="0 0 14 13"><rect x=".5" y=".5" width="12" height="10.500" fill="#fff" stroke="#0f6288" stroke-width="1"/><rect x=".5" y=".5" width="12" height="2.500" fill="#0f6288"/><path d="M2.500 5.500h3M2.500 8h2.500" stroke="#0f6288" stroke-width="1.100"/><circle cx="8.500" cy="7.500" r="2.300" fill="#fff" stroke="#0f6288" stroke-width="1.200"/><path d="M10.200 9.200l2.800 2.800" stroke="#0f6288" stroke-width="1.500"/></svg>
<svg class="a" style="left:1263.5px;top:341px;" width="3" height="12" viewBox="0 0 3 12"><circle cx="1.500" cy="1.500" r="1.100" fill="#555"/><circle cx="1.500" cy="6" r="1.100" fill="#555"/><circle cx="1.500" cy="10.500" r="1.100" fill="#555"/></svg>
<div class="a t " style="left:149.8px;top:360.8px;letter-spacing:0.39px;color:#8c8c8c">ID</div>
<svg class="a" style="left:170.7px;top:362px;" width="14" height="13" viewBox="0 0 14 13"><path d="M0 0h14L9.400 6.500V13H4.600V6.500z" fill="#c8c8c8"/></svg>
<div class="a t " style="left:189.8px;top:360.8px;letter-spacing:0.21px;color:#8c8c8c">Дата продажи</div>
<svg class="a" style="left:278.7px;top:362px;" width="14" height="13" viewBox="0 0 14 13"><path d="M0 0h14L9.400 6.500V13H4.600V6.500z" fill="#c8c8c8"/></svg>
<div class="a t " style="left:297.8px;top:360.8px;letter-spacing:0.19px;color:#8c8c8c">Дата оплаты</div>
<svg class="a" style="left:391.7px;top:362px;" width="14" height="13" viewBox="0 0 14 13"><path d="M0 0h14L9.400 6.500V13H4.600V6.500z" fill="#c8c8c8"/></svg>
<div class="a t " style="left:410.8px;top:360.8px;letter-spacing:0.11px;color:#8c8c8c">Маркетплейс</div>
<svg class="a" style="left:503.7px;top:362px;" width="14" height="13" viewBox="0 0 14 13"><path d="M0 0h14L9.400 6.500V13H4.600V6.500z" fill="#c8c8c8"/></svg>
<div class="a t " style="left:522.8px;top:360.8px;letter-spacing:-0.00px;color:#8c8c8c">Варианты</div>
<svg class="a" style="left:639.7px;top:362px;" width="14" height="13" viewBox="0 0 14 13"><path d="M0 0h14L9.400 6.500V13H4.600V6.500z" fill="#c8c8c8"/></svg>
<div class="a t " style="left:658.8px;top:360.8px;letter-spacing:-0.32px;color:#8c8c8c">К...</div>
<svg class="a" style="left:675.7px;top:362px;" width="14" height="13" viewBox="0 0 14 13"><path d="M0 0h14L9.400 6.500V13H4.600V6.500z" fill="#c8c8c8"/></svg>
<div class="a t " style="left:694.8px;top:360.8px;letter-spacing:-0.10px;color:#8c8c8c">Цена за единицу бр...</div>
<svg class="a" style="left:807.7px;top:362px;" width="14" height="13" viewBox="0 0 14 13"><path d="M0 0h14L9.400 6.500V13H4.600V6.500z" fill="#c8c8c8"/></svg>
<div class="a t " style="left:826.8px;top:360.8px;letter-spacing:-0.14px;color:#8c8c8c">Оплаченная сум...</div>
<svg class="a" style="left:919.7px;top:362px;" width="14" height="13" viewBox="0 0 14 13"><path d="M0 0h14L9.400 6.500V13H4.600V6.500z" fill="#c8c8c8"/></svg>
<div class="a t " style="left:938.8px;top:360.8px;letter-spacing:0.09px;color:#8c8c8c">Обменный курс</div>
<svg class="a" style="left:1032.7px;top:362px;" width="14" height="13" viewBox="0 0 14 13"><path d="M0 0h14L9.400 6.500V13H4.600V6.500z" fill="#c8c8c8"/></svg>
<div class="a t " style="left:1051.8px;top:360.8px;letter-spacing:0.02px;color:#8c8c8c">Дата обменного...</div>
<svg class="a" style="left:1144.7px;top:362px;" width="14" height="13" viewBox="0 0 14 13"><path d="M0 0h14L9.400 6.500V13H4.600V6.500z" fill="#c8c8c8"/></svg>
<div class="a t " style="left:1163.8px;top:360.8px;letter-spacing:-0.06px;color:#8c8c8c">Валюта обменн...</div>
<svg class="a" style="left:1258.7px;top:362px;" width="14" height="13" viewBox="0 0 14 13"><path d="M0 0h14L9.400 6.500V13H4.600V6.500z" fill="#c8c8c8"/></svg>
<div class="a " style="left:106px;top:364px;width:13px;height:13px;border:1px solid #c9c9c9;border-radius:2px;background:#fff;box-sizing:border-box"></div>
<div class="a " style="left:110px;top:368px;width:5px;height:5px;background:#0f7dc2"></div>
<div class="a " style="left:78px;top:384px;width:1197px;height:59px;background:#b9bdbc"></div>
<div class="a " style="left:78px;top:381.5px;width:1197px;height:1px;background:#d6d6d6"></div>
<div class="a " style="left:78px;top:359px;width:1197px;height:1px;background:#e0e0e0"></div>
<div class="a " style="left:78px;top:461px;width:1197px;height:1px;background:#d6d6d6"></div>
<div class="a " style="left:78px;top:480px;width:1197px;height:1px;background:#d6d6d6"></div>
<div class="a " style="left:78px;top:499px;width:1197px;height:1px;background:#d6d6d6"></div>
<div class="a " style="left:78px;top:359px;width:1px;height:254px;background:#d6d6d6"></div>
<div class="a " style="left:146px;top:359px;width:1px;height:229px;background:#d6d6d6"></div>
<div class="a " style="left:186px;top:359px;width:1px;height:229px;background:#d6d6d6"></div>
<div class="a " style="left:294px;top:359px;width:1px;height:229px;background:#d6d6d6"></div>
<div class="a " style="left:407px;top:359px;width:1px;height:229px;background:#d6d6d6"></div>
<div class="a " style="left:519px;top:359px;width:1px;height:229px;background:#d6d6d6"></div>
<div class="a " style="left:655px;top:359px;width:1px;height:229px;background:#d6d6d6"></div>
<div class="a " style="left:691px;top:359px;width:1px;height:229px;background:#d6d6d6"></div>
<div class="a " style="left:823px;top:359px;width:1px;height:229px;background:#d6d6d6"></div>
<div class="a " style="left:935px;top:359px;width:1px;height:229px;background:#d6d6d6"></div>
<div class="a " style="left:1048px;top:359px;width:1px;height:229px;background:#d6d6d6"></div>
<div class="a " style="left:1160px;top:359px;width:1px;height:229px;background:#d6d6d6"></div>
<div class="a " style="left:1274px;top:359px;width:1px;height:254px;background:#d6d6d6"></div>
<div class="a " style="left:146px;top:384px;width:1px;height:59px;background:#dfe1e0"></div>
<div class="a " style="left:186px;top:384px;width:1px;height:59px;background:#dfe1e0"></div>
<div class="a " style="left:294px;top:384px;width:1px;height:59px;background:#dfe1e0"></div>
<div class="a " style="left:407px;top:384px;width:1px;height:59px;background:#dfe1e0"></div>
<div class="a " style="left:519px;top:384px;width:1px;height:59px;background:#dfe1e0"></div>
<div class="a " style="left:655px;top:384px;width:1px;height:59px;background:#dfe1e0"></div>
<div class="a " style="left:691px;top:384px;width:1px;height:59px;background:#dfe1e0"></div>
<div class="a " style="left:823px;top:384px;width:1px;height:59px;background:#dfe1e0"></div>
<div class="a " style="left:935px;top:384px;width:1px;height:59px;background:#dfe1e0"></div>
<div class="a " style="left:1048px;top:384px;width:1px;height:59px;background:#dfe1e0"></div>
<div class="a " style="left:1160px;top:384px;width:1px;height:59px;background:#dfe1e0"></div>
<div class="a " style="left:75px;top:382px;width:1207px;height:63px;border:3px solid #ff2a0a;box-sizing:border-box"></div>
<div class="a " style="left:105px;top:405px;width:14px;height:14px;background:#fff;border-radius:2px"></div>
<svg class="a" style="left:107.5px;top:408px;" width="10" height="8" viewBox="0 0 10 8"><path d="M1 4l2.800 2.800L9 1.200" fill="none" stroke="#0f7dc2" stroke-width="1.500"/></svg>
<div class="a t " style="left:149px;top:405.3px;color:#3a3a3a">12</div>
<div class="a t " style="left:189px;top:405.3px;color:#3a3a3a">16.02.2025 12:35:38</div>
<div class="a t " style="left:297px;top:405.3px;color:#3a3a3a">16.02.2025 0:00:00</div>
<div class="a t " style="left:522px;top:381.0px;color:#3a3a3a">Ч 4</div>
<div class="a t " style="left:658px;top:381.0px;color:#3a3a3a">1</div>
<div class="a t " style="left:694px;top:381.0px;color:#3a3a3a">10,00</div>
<div class="a t " style="left:522px;top:396.4px;color:#3a3a3a">Я 150</div>
<div class="a t " style="left:658px;top:396.4px;color:#3a3a3a">1</div>
<div class="a t " style="left:694px;top:396.4px;color:#3a3a3a">6,00</div>
<div class="a t " style="left:522px;top:411.8px;color:#3a3a3a">У 200</div>
<div class="a t " style="left:658px;top:411.8px;color:#3a3a3a">1</div>
<div class="a t " style="left:694px;top:411.8px;color:#3a3a3a">15,00</div>
<div class="a t " style="left:522px;top:427.2px;color:#3a3a3a">В 42</div>
<div class="a t " style="left:658px;top:427.2px;color:#3a3a3a">1</div>
<div class="a t " style="left:694px;top:427.2px;color:#3a3a3a">35,00</div>
<div class="a t " style="left:826px;top:405.3px;color:#3a3a3a">85,00</div>
<div class="a t " style="left:938px;top:405.3px;color:#3a3a3a">1</div>
<div class="a t " style="left:1051px;top:405.3px;color:#3a3a3a">16.02.2025 0:00:00</div>
<div class="a t " style="left:1163px;top:405.3px;color:#3a3a3a">EUR</div>
<div class="a t " style="left:149px;top:443.8px;color:#3a3a3a">8</div>
<div class="a t " style="left:189px;top:443.8px;color:#3a3a3a">16.02.2025 12:36:39</div>
<div class="a t " style="left:297px;top:443.8px;color:#3a3a3a">16.02.2025 0:00:00</div>
<div class="a t " style="left:522px;top:443.8px;color:#3a3a3a">М 654</div>
<div class="a t " style="left:658px;top:443.8px;color:#3a3a3a">1</div>
<div class="a t " style="left:694px;top:443.8px;color:#3a3a3a">28,00</div>
<div class="a t " style="left:826px;top:443.8px;color:#3a3a3a">85,00</div>
<div class="a t " style="left:938px;top:443.8px;color:#3a3a3a">1</div>
<div class="a t " style="left:1051px;top:443.8px;color:#3a3a3a">16.02.2025 0:00:00</div>
<div class="a t " style="left:1163px;top:443.8px;color:#3a3a3a">EUR</div>
<div class="a t " style="left:149px;top:462.4px;color:#3a3a3a">7</div>
<div class="a t " style="left:189px;top:462.4px;color:#3a3a3a">16.02.2025 12:36:14</div>
<div class="a t " style="left:522px;top:462.4px;color:#3a3a3a">А 37</div>
<div class="a t " style="left:658px;top:462.4px;color:#3a3a3a">1</div>
<div class="a t " style="left:694px;top:462.4px;color:#3a3a3a">135,00</div>
<div class="a t " style="left:826px;top:462.4px;color:#3a3a3a">0,00</div>
<div class="a t " style="left:149px;top:481.4px;color:#3a3a3a">11</div>
<div class="a t " style="left:189px;top:481.4px;color:#3a3a3a">16.02.2025 11:18:18</div>
<div class="a t " style="left:297px;top:481.4px;color:#3a3a3a">16.02.2025 0:00:00</div>
<div class="a t " style="left:522px;top:481.4px;color:#3a3a3a">Ф 156</div>
<div class="a t " style="left:658px;top:481.4px;color:#3a3a3a">1</div>
<div class="a t " style="left:694px;top:481.4px;color:#3a3a3a">15,00</div>
<div class="a t " style="left:826px;top:481.4px;color:#3a3a3a">15,00</div>
<div class="a t " style="left:938px;top:481.4px;color:#3a3a3a">1</div>
<div class="a t " style="left:1051px;top:481.4px;color:#3a3a3a">16.02.2025 0:00:00</div>
<div class="a t " style="left:1163px;top:481.4px;color:#3a3a3a">EUR</div>
<div class="a " style="left:78px;top:598px;width:1197px;height:1px;background:#d6d6d6"></div>
<div class="a " style="left:78px;top:613px;width:1197px;height:1px;background:#d6d6d6"></div>
<div class="a t " style="left:656px;top:596.7px;font-weight:bold;color:#6e6e6e">4</div>
<div class="a t " style="left:824px;top:596.7px;font-weight:bold;color:#6e6e6e">185,00</div>
<div class="a " style="left:79px;top:616px;width:22px;height:20.5px;background:#d9d9d9;border-radius:2px"></div>
<div class="a t " style="left:84px;top:618.3px;color:#3a3a3a">50</div>
<div class="a t " style="left:111px;top:618.3px;color:#3a3a3a">100</div>
<div class="a t " style="left:144px;top:618.3px;color:#3a3a3a">200</div>
<div class="a t " style="right:115.5px;top:618.3px;color:#8a8a8a">Страница 1 из 1 (Всего элементов: 4)</div>
<div class="a " style="left:1257.5px;top:616px;width:17px;height:20.5px;background:#d9d9d9;border-radius:2px"></div>
<div class="a t " style="left:1262.5px;top:618.3px;color:#555;font-weight:bold">1</div>
</body></html>
